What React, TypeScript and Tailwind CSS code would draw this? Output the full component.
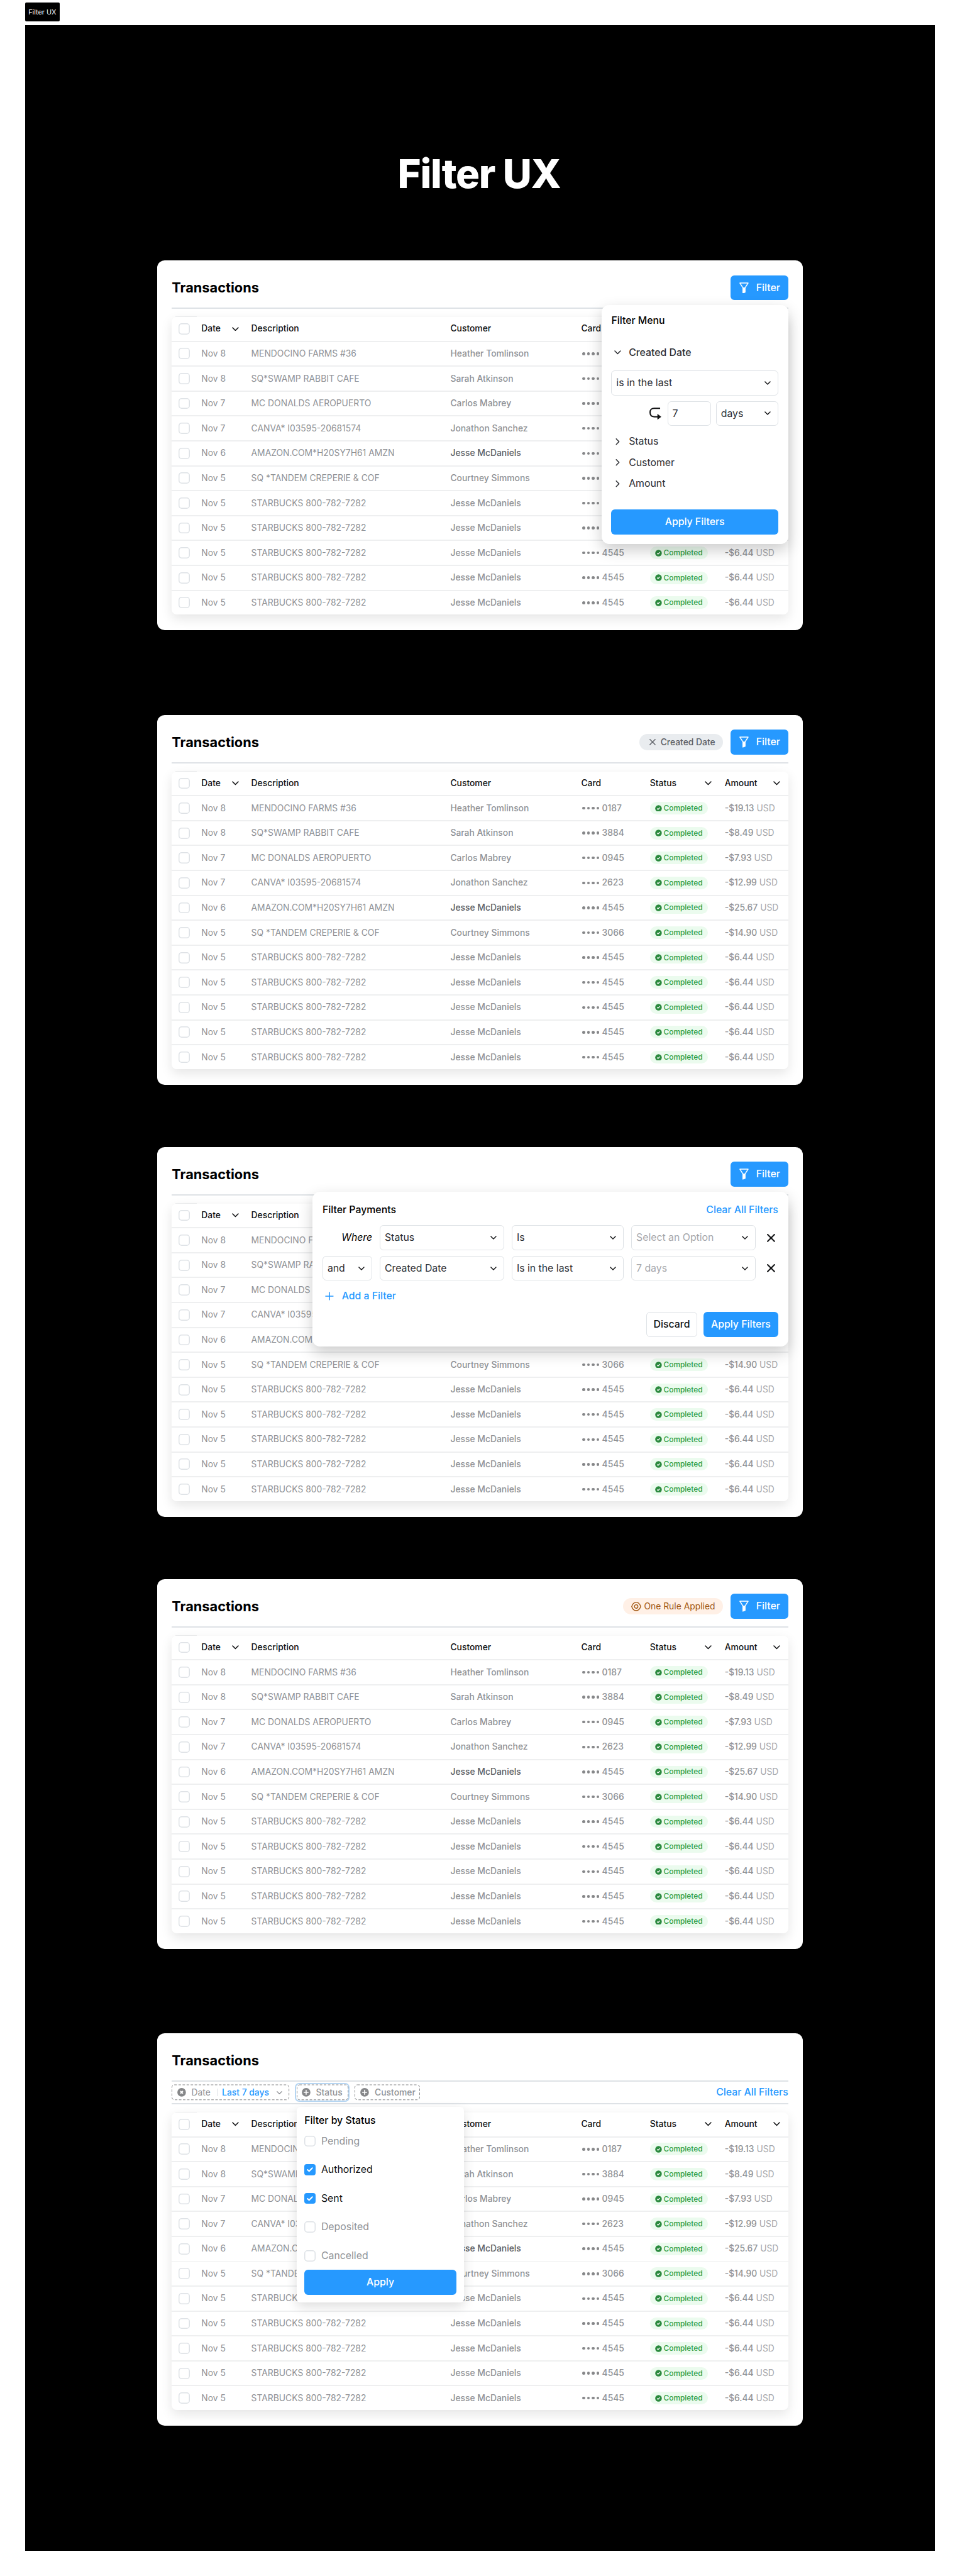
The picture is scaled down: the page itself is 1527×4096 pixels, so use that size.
import React from "react";

type Row = {
  date: string;
  description: string;
  customer: string;
  card: string;
  amount: string;
  strong?: boolean;
};

const starbucks: Row = {
  date: "Nov 5",
  description: "STARBUCKS 800-782-7282",
  customer: "Jesse McDaniels",
  card: "4545",
  amount: "-$6.44",
};

const rows: Row[] = [
  { date: "Nov 8", description: "MENDOCINO FARMS #36", customer: "Heather Tomlinson", card: "0187", amount: "-$19.13" },
  { date: "Nov 8", description: "SQ*SWAMP RABBIT CAFE", customer: "Sarah Atkinson", card: "3884", amount: "-$8.49" },
  { date: "Nov 7", description: "MC DONALDS AEROPUERTO", customer: "Carlos Mabrey", card: "0945", amount: "-$7.93" },
  { date: "Nov 7", description: "CANVA* I03595-20681574", customer: "Jonathon Sanchez", card: "2623", amount: "-$12.99" },
  { date: "Nov 6", description: "AMAZON.COM*H20SY7H61 AMZN", customer: "Jesse McDaniels", card: "4545", amount: "-$25.67", strong: true },
  { date: "Nov 5", description: "SQ *TANDEM CREPERIE & COF", customer: "Courtney Simmons", card: "3066", amount: "-$14.90" },
  starbucks,
  starbucks,
  starbucks,
  starbucks,
  starbucks,
];

function Chevron({ className = "", size = 11 }: { className?: string; size?: number }) {
  return (
    <svg className={className} width={size} height={size * 0.6} viewBox="0 0 11 6.6" fill="none" stroke="currentColor" strokeWidth="1.6" strokeLinecap="round" strokeLinejoin="round">
      <path d="M1 1l4.5 4.5L10 1" />
    </svg>
  );
}

function Cross({ size, width }: { size: number; width: number }) {
  return (
    <svg width={size} height={size} viewBox="0 0 12 12" fill="none" stroke="currentColor" strokeWidth={width} strokeLinecap="round">
      <path d="M1 1l10 10M11 1L1 11" />
    </svg>
  );
}

function FunnelIcon() {
  return (
    <svg width="15" height="18" viewBox="0 0 15 18" fill="none" stroke="#fff" strokeWidth="1.5" strokeLinejoin="round">
      <path d="M.9 1.1h13.2L9.2 8.8v6.9l-3.4 1.4V8.8Z" />
      <path d="M6.5 8.8h2v6.6l-2 .9Z" fill="#fff" />
    </svg>
  );
}

function HookArrow() {
  return (
    <svg width="19" height="20" viewBox="0 0 19 20" fill="none">
      <path d="M17.2 1.2H7.6C3.2 1.2 1 3.4 1 7.9c0 4.7 2.3 6.9 6.8 6.9H14" stroke="#101113" strokeWidth="2" />
      <path d="M12.8 10l6.2 4.8-6.2 4.9Z" fill="#101113" />
    </svg>
  );
}

function EyeIcon() {
  return (
    <svg width="16" height="15" viewBox="0 0 16 15" fill="none" stroke="currentColor" strokeWidth="1.4">
      <path d="M.8 7.5C2.2 3.2 4.8.9 8 .9s5.8 2.3 7.2 6.6C13.8 11.8 11.2 14.1 8 14.1S2.2 11.8.8 7.5Z" />
      <circle cx="8" cy="7.5" r="2.8" />
    </svg>
  );
}

function BadgeIcon({ close = false }: { close?: boolean }) {
  return (
    <svg width="14" height="14" viewBox="0 0 14 14">
      <circle cx="7" cy="7" r="6.9" fill="#868789" />
      <path
        d={close ? "M5 5l4 4M9 5L5 9" : "M7 3.7v6.6M3.7 7h6.6"}
        stroke="#fff"
        strokeWidth={close ? 1.9 : 1.6}
        strokeLinecap={close ? "butt" : "round"}
      />
    </svg>
  );
}

function Checkbox({ checked = false }: { checked?: boolean }) {
  if (checked) {
    return (
      <span className="flex size-[18px] items-center justify-center rounded-[4px] bg-[#2699ff]">
        <svg width="10" height="8" viewBox="0 0 10 8" fill="none" stroke="#fff" strokeWidth="2" strokeLinecap="round" strokeLinejoin="round">
          <path d="M1.2 4l2.4 2.5L8.8 1.3" />
        </svg>
      </span>
    );
  }
  return <span className="block size-[18px] rounded-[5px] bg-white shadow-[inset_0_0_0_1.5px_#dee2e6]" />;
}

function FilterButton() {
  return (
    <div className="flex h-10 w-[93px] items-center rounded-[6px] bg-[#2699ff] pl-[15px] text-[16px] font-medium text-white">
      <FunnelIcon />
      <span className="ml-[11.5px]">Filter</span>
    </div>
  );
}

function CompletedPill() {
  return (
    <span className="flex h-5 w-[93px] items-center rounded-full bg-[#ebfbee] pl-[8.5px] text-[12px] font-medium text-[#2f9e44]">
      <svg className="mr-[2.5px]" width="11" height="11" viewBox="0 0 11 11" fill="none">
        <circle cx="5.5" cy="5.5" r="5.3" fill="#2b8a3e" />
        <path d="M3.3 5.6l1.5 1.5 2.9-2.9" stroke="#fff" strokeWidth="1.3" />
      </svg>
      Completed
    </span>
  );
}

const columns = "grid h-[38px] grid-cols-[47.5px_80px_320px_210px_110.5px_120px_102px] items-center";

function Table() {
  return (
    <div className="rounded-[8px] bg-white text-[14px] shadow-[0_7px_18px_rgba(0,0,0,0.1)]">
      <div className={columns + " font-medium text-[#101113]"}>
        <span className="pl-[11px]"><Checkbox /></span>
        <span className="flex items-center justify-between pr-[20px]">Date <Chevron /></span>
        <span>Description</span>
        <span>Customer</span>
        <span>Card</span>
        <span className="flex items-center justify-between pr-[21px]">Status <Chevron /></span>
        <span className="flex items-center justify-between pr-[12.5px]">Amount <Chevron /></span>
      </div>
      {rows.map((r, i) => (
        <React.Fragment key={i}>
          <div className="h-[2px] bg-[#eeeff0]" />
          <div className={columns + " text-[#909296]"}>
            <span className="pl-[11px]"><Checkbox /></span>
            <span>{r.date}</span>
            <span>{r.description}</span>
            <span className={r.strong ? "font-medium text-[#5c5f66]" : "font-medium"}>{r.customer}</span>
            <span className="flex items-center font-medium">
              <span className="ml-[2px] mr-[4.5px] flex gap-[3px]">
                <i className="size-[4.5px] rounded-full bg-[#868789]" />
                <i className="size-[4.5px] rounded-full bg-[#868789]" />
                <i className="size-[4.5px] rounded-full bg-[#868789]" />
                <i className="size-[4.5px] rounded-full bg-[#868789]" />
              </span>
              {r.card}
            </span>
            <span><CompletedPill /></span>
            <span><span className="font-medium">{r.amount}</span> <span className="text-[#a6a7ab]">USD</span></span>
          </div>
        </React.Fragment>
      ))}
    </div>
  );
}

function Card({
  className = "",
  action,
  toolbar,
  children,
}: {
  className?: string;
  action?: React.ReactNode;
  toolbar?: React.ReactNode;
  children?: React.ReactNode;
}) {
  return (
    <section className={"relative w-[1038px] rounded-[12px] bg-white px-6 pt-6 pb-[25px] " + className}>
      <header className="flex h-10 items-center justify-between">
        <h2 className="text-[22px] font-bold text-black">Transactions</h2>
        {action}
      </header>
      <div className="mt-3 h-[2px] bg-[#dee2e6]" />
      {toolbar}
      <div className="mt-3 ml-[6px] h-px w-[34px] bg-[#eeeff0]" />
      <Table />
      {children}
    </section>
  );
}

function Select({ label, className = "", muted = false }: { label: string; className?: string; muted?: boolean }) {
  return (
    <div className={"flex h-10 items-center justify-between rounded-[6px] border border-[#dee2e6] bg-white pr-[11px] pl-[7px] text-[16px] " + className}>
      <span className={muted ? "text-[#a6a7ab]" : "text-[#2c2e33]"}>{label}</span>
      <Chevron className="text-[#101113]" size={10} />
    </div>
  );
}

const popover = "absolute rounded-[12px] bg-white px-4 pb-4 text-[16px] shadow-[0_10px_24px_rgba(0,0,0,0.2)]";

function FilterMenu() {
  return (
    <div className={popover + " top-[72px] right-6 h-[384px] w-[300px] pt-[15px]"}>
      <div className="h-5 leading-5 font-medium text-black">Filter Menu</div>
      <div className="mt-[31px] flex h-5 items-center pl-[5px] font-medium text-[#2c2e33]">
        <Chevron className="mr-[12px]" />
        Created Date
      </div>
      <Select label="is in the last" className="mt-[19px]" />
      <div className="mt-[9px] flex items-center justify-end">
        <HookArrow />
        <div className="ml-[10px] flex h-10 w-[70px] items-center rounded-[6px] border border-[#dee2e6] pl-[7px] text-[#2c2e33]">7</div>
        <Select label="days" className="ml-2 w-[100px]" />
      </div>
      <div className="mt-[8px] text-[#2c2e33]">
        {["Status", "Customer", "Amount"].map((name) => (
          <div key={name} className="flex h-[34px] items-center pl-[5px]">
            <Chevron className="mr-[12px] -rotate-90" />
            {name}
          </div>
        ))}
      </div>
      <div className="mt-[24px] flex h-10 items-center justify-center rounded-[6px] bg-[#2699ff] font-medium text-white">Apply Filters</div>
    </div>
  );
}

function FilterBuilder() {
  return (
    <div className={popover + " top-[72px] right-6 h-[249px] w-[764px] pt-4"}>
      <div className="flex h-[26px] items-center justify-between font-medium">
        <span className="text-black">Filter Payments</span>
        <span className="text-[#2699ff]">Clear All Filters</span>
      </div>
      <div className="mt-[12px] grid grid-cols-[80px_200px_180px_200px_14px] items-center gap-x-3 gap-y-[9px]">
        <span className="text-right text-black italic">Where</span>
        <Select label="Status" />
        <Select label="Is" />
        <Select label="Select an Option" muted />
        <span className="pl-[6px] text-[#101113]"><Cross size={13} width={1.9} /></span>
        <Select label="and" />
        <Select label="Created Date" />
        <Select label="Is in the last" />
        <Select label="7 days" muted />
        <span className="pl-[6px] text-[#101113]"><Cross size={13} width={1.9} /></span>
      </div>
      <div className="mt-[15px] flex h-5 items-center pl-[4px] font-medium text-[#2699ff]">
        <svg className="mr-[13px]" width="14" height="14" viewBox="0 0 14 14" fill="none" stroke="currentColor" strokeWidth="1.6" strokeLinecap="round">
          <path d="M7 1v12M1 7h12" />
        </svg>
        Add a Filter
      </div>
      <div className="mt-[15px] flex justify-end gap-[10px] font-medium">
        <div className="flex h-10 w-[82px] items-center justify-center rounded-[6px] border border-[#dee2e6] text-[#101113]">Discard</div>
        <div className="flex h-10 w-[120px] items-center justify-center rounded-[6px] bg-[#2699ff] text-white">Apply Filters</div>
      </div>
    </div>
  );
}

function DashedChip({ className, children }: { className: string; children: React.ReactNode }) {
  return (
    <div className={"relative flex h-6 items-center text-[14px] text-[#909296] " + className}>
      <svg className="absolute inset-0 size-full overflow-visible" fill="none">
        <rect x="0.5" y="0" width="100%" height="100%" rx="4" stroke="#868789" strokeDasharray="4 2.5" />
      </svg>
      {children}
    </div>
  );
}

function Toolbar() {
  return (
    <>
      <div className="flex h-[34px] items-center">
        <DashedChip className="w-[188px] pl-[9px]">
          <BadgeIcon close />
          <span className="ml-[8.5px]">Date</span>
          <span className="ml-[10px] h-3 w-px bg-[#dee2e6]" />
          <span className="ml-[7.5px] font-medium text-[#2699ff]">Last 7 days</span>
          <Chevron className="ml-[12px]" size={9} />
        </DashedChip>
        <div className="ml-[9.5px] rounded-[7px] border-[3px] border-[#b5d5f2] p-px">
          <DashedChip className="w-[82px] pl-[8px]">
            <BadgeIcon />
            <span className="ml-[9px] font-medium">Status</span>
          </DashedChip>
        </div>
        <DashedChip className="ml-[8.5px] w-[104px] pl-[9px]">
          <BadgeIcon />
          <span className="ml-[9px] font-medium">Customer</span>
        </DashedChip>
        <span className="ml-auto text-[16px] font-medium text-[#2699ff]">Clear All Filters</span>
      </div>
      <div className="h-[2px] bg-[#dee2e6]" />
    </>
  );
}

const statuses = [
  { name: "Pending", on: false },
  { name: "Authorized", on: true },
  { name: "Sent", on: true },
  { name: "Deposited", on: false },
  { name: "Cancelled", on: false },
];

function StatusPopover() {
  return (
    <div className="absolute top-[118px] left-[225px] h-[314px] w-[268px] rounded-[6px] bg-white px-3 pt-3 text-[16px] shadow-[0_7px_18px_rgba(0,0,0,0.13)]">
      <div className="h-5 leading-5 font-medium text-black">Filter by Status</div>
      <div>
        {statuses.map((s) => (
          <div key={s.name} className="flex h-[46px] items-center gap-[9px]">
            <Checkbox checked={s.on} />
            <span className={s.on ? "text-[#101113]" : "text-[#909296]"}>{s.name}</span>
          </div>
        ))}
      </div>
      <div className="flex h-10 items-center justify-center rounded-[6px] bg-[#2699ff] font-medium text-white">Apply</div>
    </div>
  );
}

export default function App() {
  return (
    <div className="h-[4136px] w-[1542px] overflow-hidden bg-white px-10 pt-1 font-[Inter,sans-serif] [zoom:0.99027]">
      <div className="flex h-[30px] w-[56px] items-center justify-center rounded-[2px] bg-black text-[11px] text-white">Filter UX</div>
      <main className="mt-[6px] flex h-[4056px] flex-col items-center bg-black">
        <h1 className="mt-[200px] h-[78px] pr-[3px] text-[64px] leading-[78px] font-extrabold tracking-[-0.02em] text-white">Filter UX</h1>
        <Card className="mt-[100px]" action={<FilterButton />}>
          <FilterMenu />
        </Card>
        <Card
          className="mt-[136px]"
          action={
            <div className="flex items-center gap-3">
              <div className="flex h-[26px] w-[134px] items-center rounded-full bg-[#e9ecef] pl-4 text-[14px] font-medium text-[#5c5f66]">
                <Cross size={10} width={1.7} />
                <span className="ml-[8px]">Created Date</span>
              </div>
              <FilterButton />
            </div>
          }
        />
        <Card className="mt-[100px]" action={<FilterButton />}>
          <FilterBuilder />
        </Card>
        <Card
          className="mt-[100px]"
          action={
            <div className="flex items-center gap-3">
              <div className="flex h-[26px] w-[160px] items-center rounded-full bg-[#fff0e6] pl-[13px] text-[14px] text-[#a1560f]">
                <EyeIcon />
                <span className="ml-[4.5px]">One Rule Applied</span>
              </div>
              <FilterButton />
            </div>
          }
        />
        <Card className="mt-[136px]" toolbar={<Toolbar />}>
          <StatusPopover />
        </Card>
      </main>
    </div>
  );
}
